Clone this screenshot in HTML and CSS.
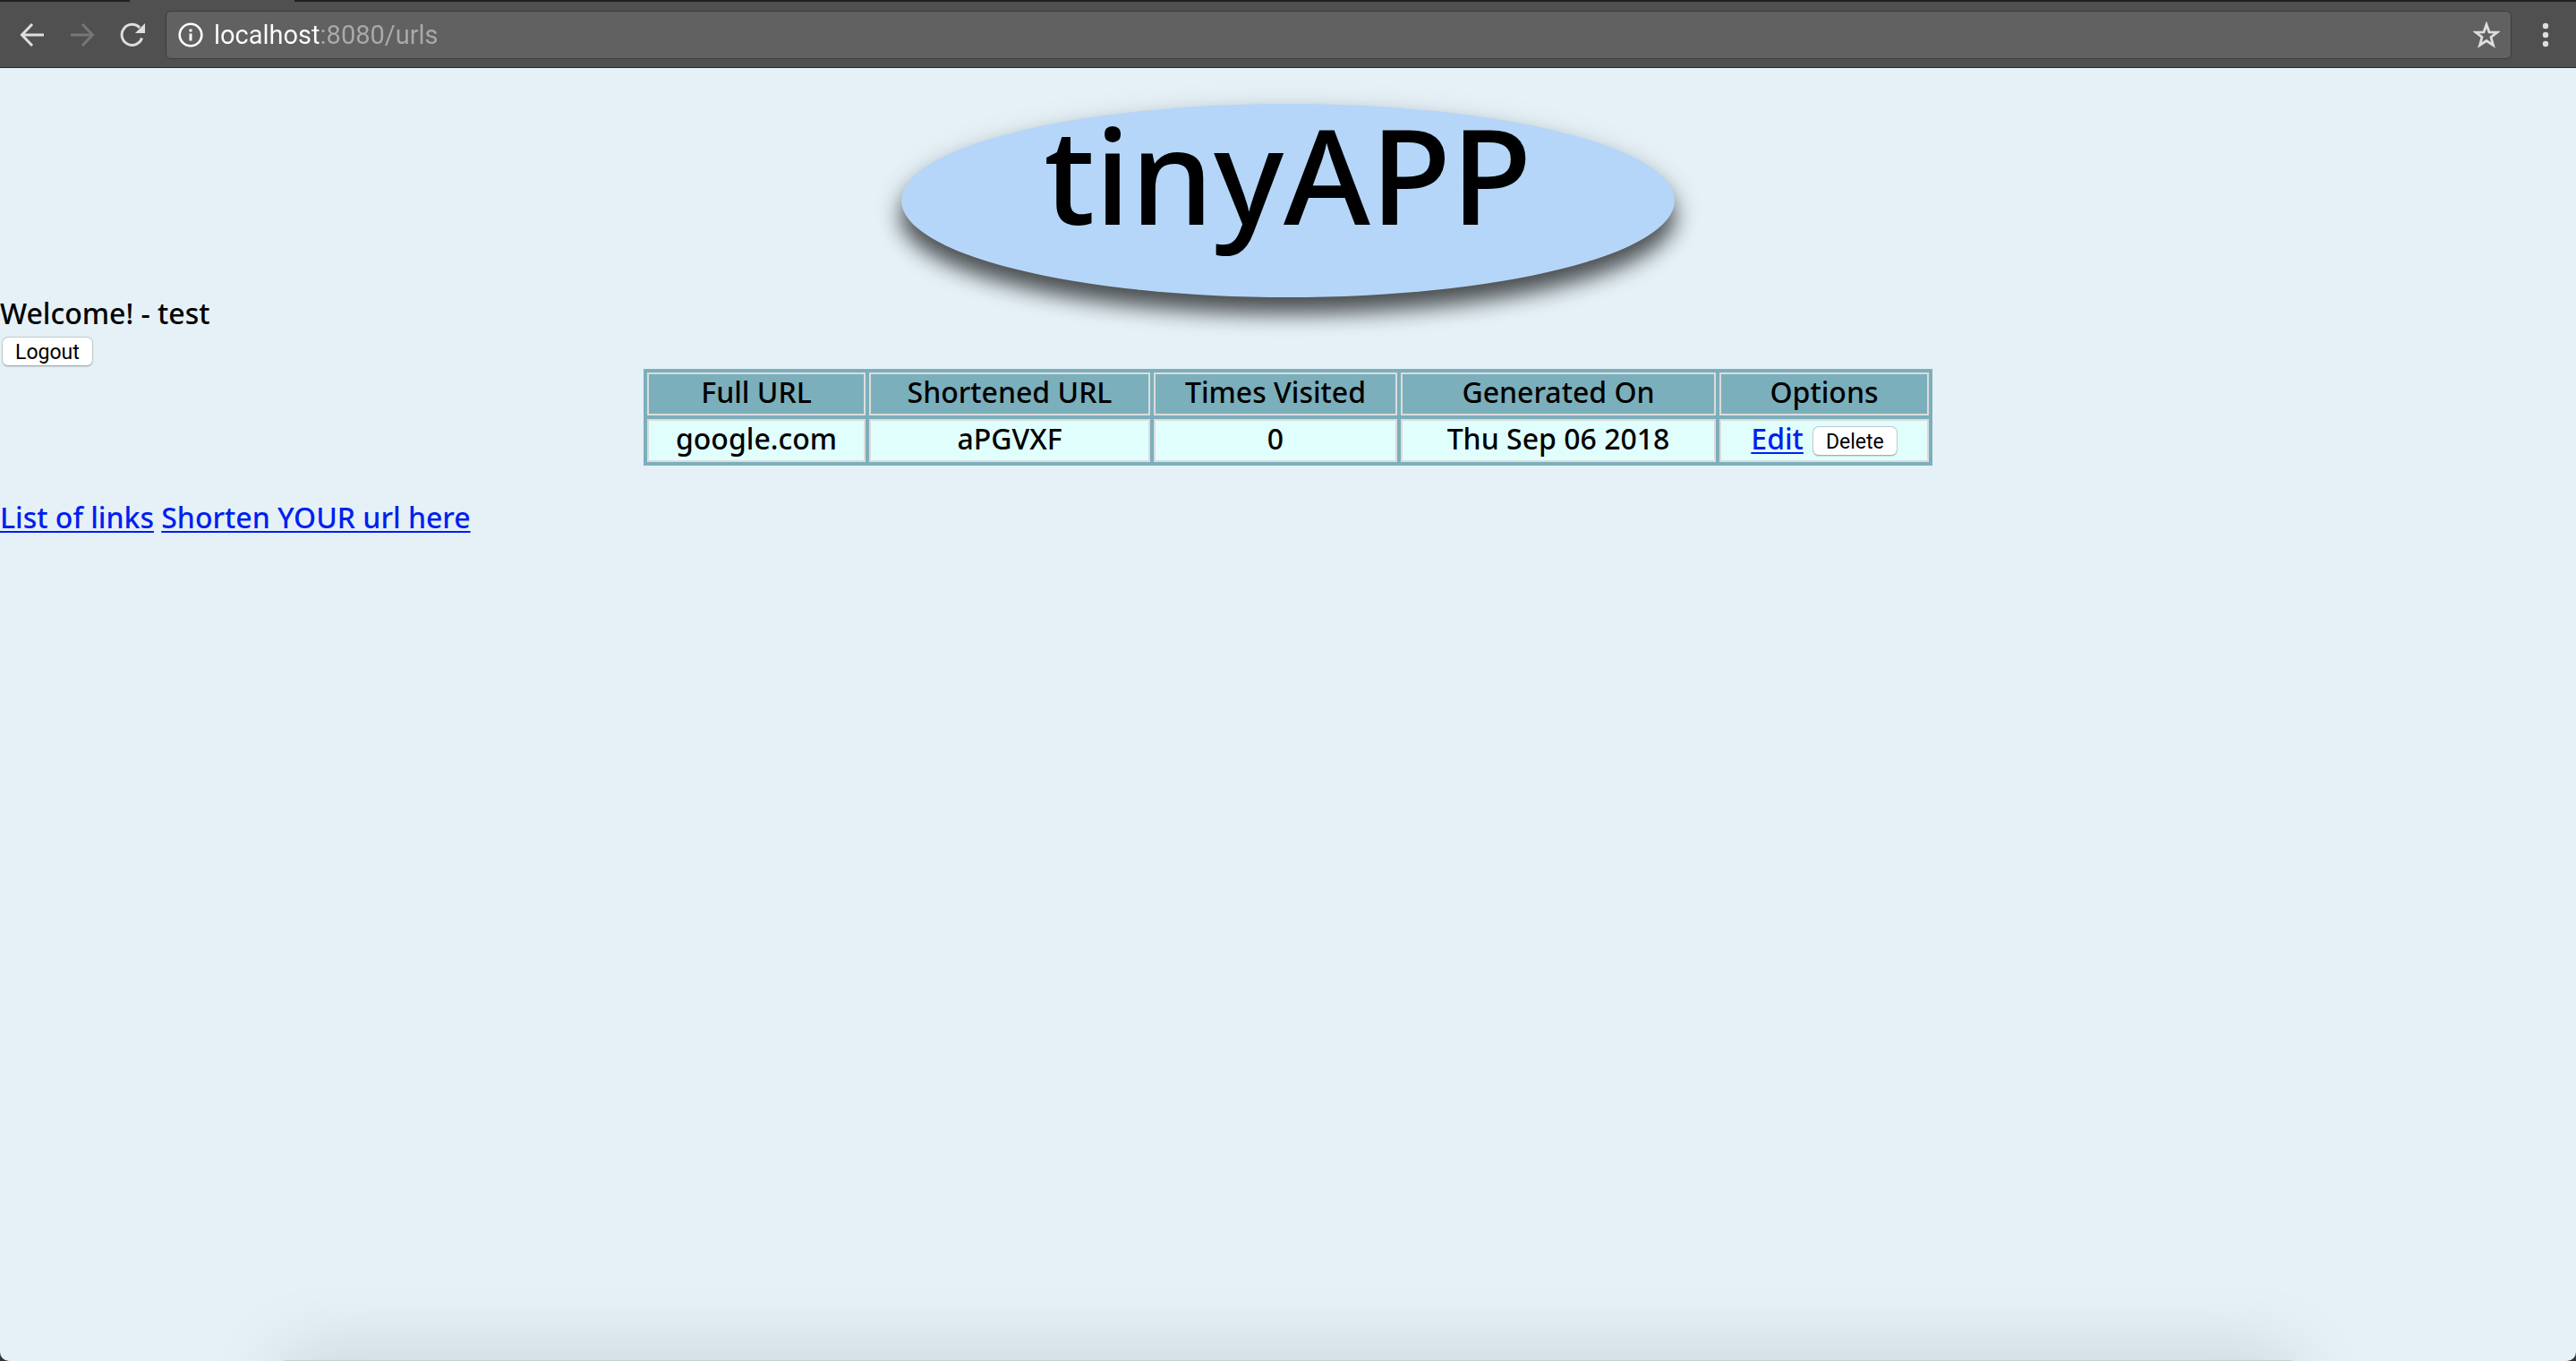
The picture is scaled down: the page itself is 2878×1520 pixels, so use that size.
FILE: index.html
```html
<!DOCTYPE html>
<html lang="en">
<head>
<meta charset="utf-8">
<title>tinyAPP</title>
<link rel="stylesheet" href="styles.css">
</head>
<body>
<div class="tabstrip"><span class="tab"></span></div>
<nav class="toolbar" aria-label="Browser">
  <button class="tool" aria-label="Back"><svg viewBox="0 0 28 28" width="28" height="28" fill="none" stroke="#dedede" stroke-width="3"><path d="M27 14H3M14 2L2.500 14L14 26"/></svg></button>
  <button class="tool" aria-label="Forward"><svg viewBox="0 0 28 28" width="28" height="28" fill="none" stroke="#767676" stroke-width="3"><path d="M1 14H25M14 2L25.500 14L14 26"/></svg></button>
  <button class="tool" aria-label="Reload"><svg viewBox="0 0 28 28" width="28" height="28"><path d="M24.500 17.500A11.500 11.500 0 1 1 22 6" fill="none" stroke="#dedede" stroke-width="3"/><path d="M28 1V12H17Z" fill="#dedede"/></svg></button>
  <div class="address">
    <svg viewBox="0 0 28 28" width="28" height="28" aria-hidden="true"><circle cx="14" cy="14" r="12.300" fill="none" stroke="#fff" stroke-width="2.600"/><path d="M12.500 7.500h3v3h-3zM12.500 12.500h3v8h-3z" fill="#fff"/></svg>
    <input class="url" type="text" aria-label="Address" value="localhost:8080/urls">
    <button class="tool" aria-label="Bookmark"><svg viewBox="0 0 30 30" width="30" height="30"><path d="M15 3.500L18 11.800L27 12L20 17.500L22.500 26.500L15 21.500L7.500 26.500L10 17.500L3 12L12 11.800Z" fill="none" stroke="#dedede" stroke-width="2.800"/></svg></button>
  </div>
  <button class="tool menu" aria-label="Menu"><svg viewBox="0 0 8 28" width="8" height="28" fill="#dedede"><circle cx="4" cy="4" r="3.200"/><circle cx="4" cy="14" r="3.200"/><circle cx="4" cy="24" r="3.200"/></svg></button>
</nav>
<main class="page">
  <h1 class="logo">tinyAPP</h1>
  <p class="welcome">Welcome! - test</p>
  <form class="logout"><button class="btn" type="button">Logout</button></form>
  <table class="urls">
    <colgroup><col class="c-full"><col class="c-short"><col class="c-times"><col class="c-date"><col class="c-opts"></colgroup>
    <thead><tr><th>Full URL</th><th>Shortened URL</th><th>Times Visited</th><th>Generated On</th><th>Options</th></tr></thead>
    <tbody><tr><td>google.com</td><td>aPGVXF</td><td>0</td><td>Thu Sep 06 2018</td><td><div class="options"><a href="#edit">Edit</a><button class="btn" type="button">Delete</button></div></td></tr></tbody>
  </table>
  <footer class="links"><a href="#urls">List of links</a> <a href="#new">Shorten YOUR url here</a></footer>
</main>
<div class="dock"><div class="dock-shadow"></div></div>
</body>
</html>
```
FILE: styles.css
```css
html {
  background: #333;
}
body {
  margin: 0;
  min-height: 100vh;
  display: flex;
  flex-direction: column;
  position: relative;
  background: #e5f1f7;
  border-radius: 0 0 10px 10px;
  font: 500 32px/36px "Noto Sans", sans-serif;
  color: #000;
}
.tabstrip {
  display: flex;
  height: 2px;
  background: #202020;
}
.tab {
  width: 184px;
  margin-left: 145px;
  background: #505050;
}
.toolbar {
  display: flex;
  align-items: center;
  height: 73px;
  padding: 0 24px 0 22px;
  gap: 28px;
  background: #505050;
  border-bottom: 1px solid #2c2629;
}
.tool {
  display: flex;
  padding: 0;
  border: 0;
  background: none;
}
.address {
  flex: 1;
  display: flex;
  align-items: center;
  box-sizing: border-box;
  height: 54px;
  margin: 0 0 0 -5px;
  padding: 0 12px 0 13px;
  gap: 12px;
  background: #616161;
  border: 1px solid #3c3c3c;
  border-radius: 6px;
}
.url {
  flex: 1;
  min-width: 0;
  padding: 0;
  border: 0;
  outline: 0;
  font: 29px/36px Roboto, sans-serif;
  color: transparent;
  background: linear-gradient(90deg, #fff 118px, #aaa 118px);
  -webkit-background-clip: text;
  background-clip: text;
}
.menu {
  width: 20px;
  justify-content: center;
}
.page {
  padding-top: 40px;
}
.logo {
  box-sizing: border-box;
  width: 30%;
  height: 216px;
  margin: 0 auto;
  border-radius: 50%;
  background: #b5d6f8;
  box-shadow: 0 18px 24px rgba(0, 0, 0, .65), 0 6px 36px rgba(0, 0, 0, .1);
  font-size: 148px;
  line-height: 156px;
  font-weight: 500;
  text-align: center;
}
.welcome {
  margin: 0;
}
.logout {
  padding: 8px 2px 3px;
}
.btn {
  display: block;
  height: 33px;
  padding: 3px 14px 0;
  border: 1px solid #c0c8ca;
  border-bottom-color: #a6aeb0;
  border-radius: 7px;
  background: #fff;
  box-shadow: 0 1px 1px rgba(0, 0, 0, .12);
  font: 23px/28px Roboto, sans-serif;
  color: #000;
}
.urls {
  width: 50%;
  margin: 0 auto;
  table-layout: fixed;
  border-spacing: 4px;
  background: #7cafbc;
  text-align: center;
}
.c-full { width: 244px; }
.c-short { width: 314px; }
.c-times { width: 272px; }
.c-date { width: 352px; }
.c-opts { width: 234px; }
.urls th,
.urls td {
  padding: 2px 2px 6px;
  border: 2px solid #dcdcdc;
}
.urls th {
  font-weight: 500;
}
.urls td {
  background: #e0fffc;
}
.options {
  display: flex;
  justify-content: center;
  align-items: flex-start;
  height: 36px;
  gap: 10px;
}
.options .btn {
  margin-top: 4px;
}
a {
  color: #001fee;
  text-decoration-thickness: 2px;
  text-underline-offset: 3px;
}
.links {
  padding-top: 40px;
}
.dock {
  position: absolute;
  left: 0;
  right: 0;
  bottom: 0;
  height: 120px;
  overflow: hidden;
  border-radius: 0 0 10px 10px;
  pointer-events: none;
}
.dock-shadow {
  height: 100px;
  margin: 119px 11% 0;
  background: #c5d0d0;
  box-shadow: 0 0 90px rgba(0, 20, 0, .15);
}
```
